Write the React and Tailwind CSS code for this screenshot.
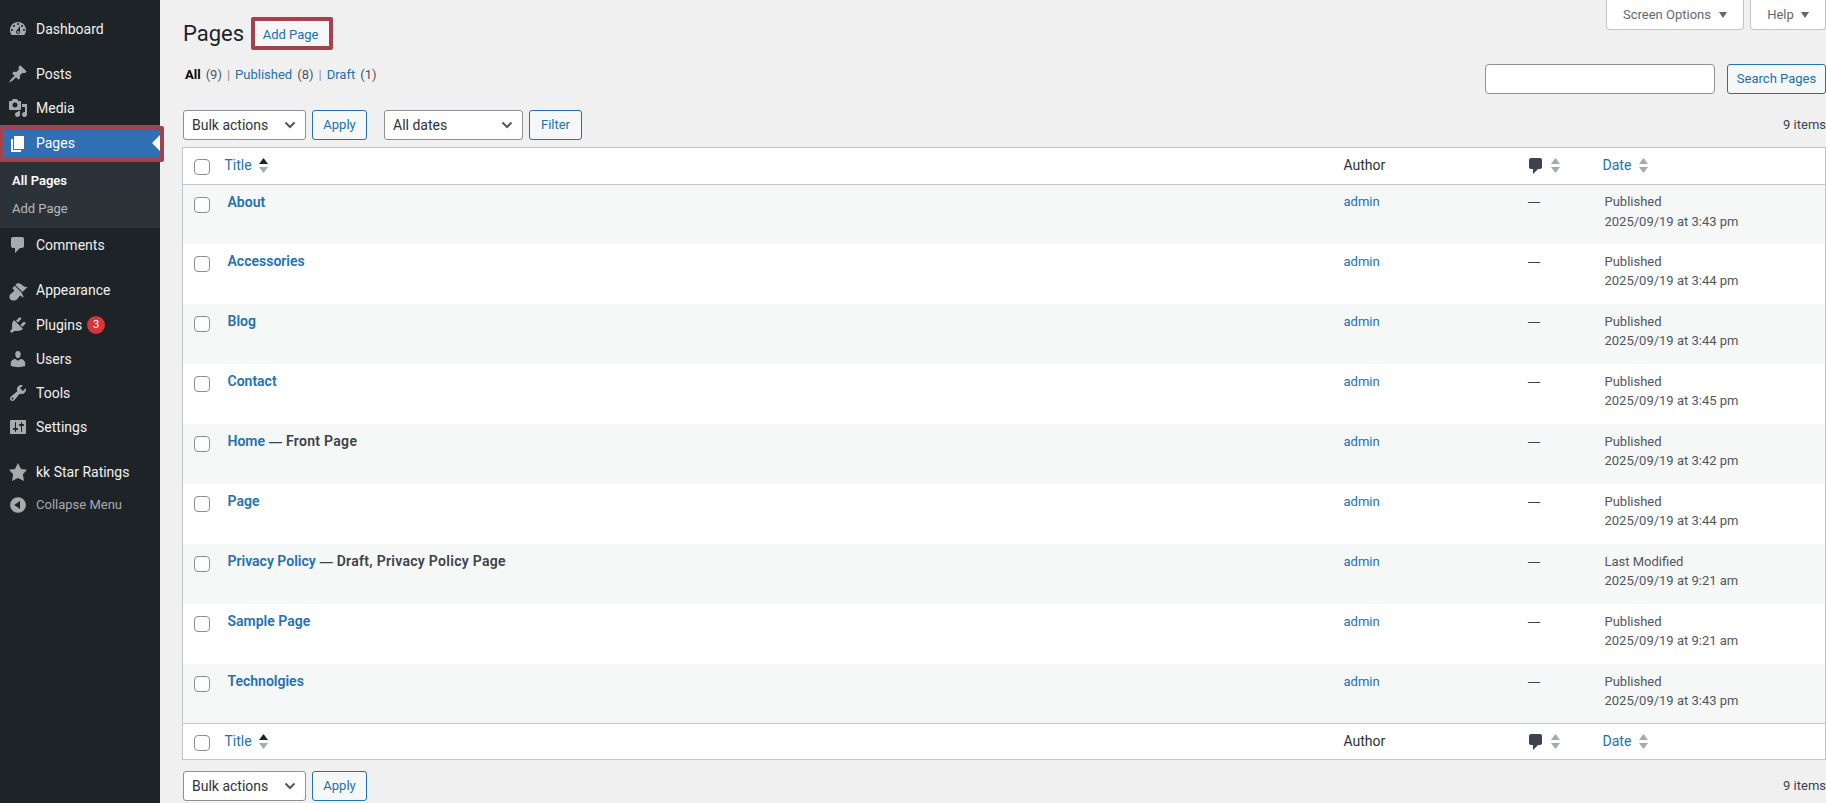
import React from "react";

const P = {
  dashboard: "M3.76 16h12.48c1.1-1.37 1.76-3.11 1.76-5 0-4.42-3.58-8-8-8s-8 3.58-8 8c0 1.89.66 3.63 1.76 5zM10 4c.55 0 1 .45 1 1s-.45 1-1 1-1-.45-1-1 .45-1 1-1zM6 6c.55 0 1 .45 1 1s-.45 1-1 1-1-.45-1-1 .45-1 1-1zm8 0c.55 0 1 .45 1 1s-.45 1-1 1-1-.45-1-1 .45-1 1-1zm-5.37 5.55L12 7v6c0 1.1-.9 2-2 2s-2-.9-2-2c0-.57.24-1.08.63-1.45zM4 10c.55 0 1 .45 1 1s-.45 1-1 1-1-.45-1-1 .45-1 1-1zm12 0c.55 0 1 .45 1 1s-.45 1-1 1-1-.45-1-1 .45-1 1-1zm-5 3c0-.55-.45-1-1-1s-1 .45-1 1 .45 1 1 1 1-.45 1-1z",
  posts: "M10.44 3.02l1.82-1.82 6.36 6.35-1.83 1.82c-1.05-.68-2.48-.57-3.41.36l-.75.75c-.92.93-1.04 2.35-.35 3.41l-1.83 1.82-2.41-2.41-2.8 2.79c-.42.42-3.38 2.71-3.8 2.29s1.86-3.39 2.28-3.81l2.79-2.79L4.1 9.36l1.83-1.82c1.05.69 2.48.57 3.4-.36l.75-.75c.93-.92 1.05-2.35.36-3.41z",
  media: "M13 11V4c0-.55-.45-1-1-1h-1.67L9 1H5L3.67 3H2c-.55 0-1 .45-1 1v7c0 .55.45 1 1 1h10c.55 0 1-.45 1-1zM7 4.5c1.38 0 2.5 1.12 2.5 2.5S8.38 9.5 7 9.5 4.5 8.38 4.5 7 5.62 4.5 7 4.5zM14 6h5v10.5c0 1.38-1.12 2.5-2.5 2.5S14 17.88 14 16.5s1.12-2.5 2.5-2.5c.17 0 .34.02.5.05V9h-3V6zm-4 8.05V13h2v3.5c0 1.38-1.12 2.5-2.5 2.5S7 17.88 7 16.5 8.12 14 9.5 14c.17 0 .34.02.5.05z",
  pages: "M6 15V2h10v13H6zm-1 1h8v2H3V5h2v11z",
  comments: "M5 2h9c1.1 0 2 .9 2 2v7c0 1.1-.9 2-2 2h-2l-5 5v-5H5c-1.1 0-2-.9-2-2V4c0-1.1.9-2 2-2z",
  appearance: "M14.48 11.06L7.41 3.99l1.5-1.5c.5-.56 2.3-.47 3.51.32 1.21.8 1.43 1.28 2.91 2.1 1.18.64 2.45 1.26 4.45.85zm-.71.71L6.7 4.7 4.93 6.47c-.39.39-.39 1.02 0 1.41l1.06 1.06c.39.39.39 1.03 0 1.42-.6.6-1.43 1.11-2.21 1.69-.35.26-.7.53-1.01.84C1.43 13.23.75 16.8 2.49 18.54c1.74 1.74 5.3 1.06 6.66-.28.31-.31.58-.66.84-1.01.58-.78 1.09-1.61 1.69-2.21.39-.39 1.03-.39 1.42 0l1.06 1.06c.39.39 1.02.39 1.41 0z",
  plugins: "M13.11 4.36L9.87 7.6 8 5.73l3.24-3.24c.35-.34 1.05-.2 1.56.32.52.51.66 1.21.31 1.55zm-8 1.77l.91-1.12 9.01 9.01-1.19.84c-.71.71-2.63 1.16-3.82 1.16H6.14L4.9 17.26c-.59.59-1.54.59-2.12 0-.59-.58-.59-1.53 0-2.12l1.24-1.24v-3.88c0-1.13.4-3.19 1.09-3.89zm7.26 3.97l3.24-3.24c.34-.35 1.04-.21 1.55.31.52.51.66 1.21.31 1.55l-3.24 3.25z",
  users: "M10 9.25c-2.27 0-2.73-3.44-2.73-3.44C7 4.02 7.82 2 9.97 2c2.16 0 2.98 2.02 2.71 3.81 0 0-.41 3.44-2.68 3.44zm0 2.57L12.72 10c2.39 0 4.52 2.33 4.52 4.53v2.49s-3.65 1.13-7.24 1.13c-3.65 0-7.24-1.13-7.24-1.13v-2.49c0-2.25 1.94-4.48 4.47-4.48z",
  tools: "M16.68 9.77c-1.34 1.34-3.3 1.67-4.95.99l-5.41 6.52c-.99.99-2.59.99-3.58 0s-.99-2.59 0-3.57l6.52-5.42c-.68-1.65-.35-3.61.99-4.95 1.28-1.28 3.12-1.62 4.72-1.06l-2.89 2.89 2.82 2.82 2.86-2.87c.53 1.58.18 3.39-1.08 4.65zM3.81 16.21c.4.39 1.04.39 1.43 0 .4-.4.4-1.04 0-1.43-.39-.4-1.03-.4-1.43 0-.39.39-.39 1.03 0 1.43z",
  settings: "M18 16V4c0-.55-.45-1-1-1H3c-.55 0-1 .45-1 1v12c0 .55.45 1 1 1h14c.55 0 1-.45 1-1zM8 11h1c.55 0 1 .45 1 1s-.45 1-1 1H8v1.5c0 .28-.22.5-.5.5s-.5-.22-.5-.5V13H6c-.55 0-1-.45-1-1s.45-1 1-1h1V5.5c0-.28.22-.5.5-.5s.5.22.5.5V11zm5-2h-1c-.55 0-1-.45-1-1s.45-1 1-1h1V5.5c0-.28.22-.5.5-.5s.5.22.5.5V7h1c.55 0 1 .45 1 1s-.45 1-1 1h-1v5.5c0 .28-.22.5-.5.5s-.5-.22-.5-.5V9z",
  star: "M10 1l3 6 6 .75-4.12 4.62L16 19l-6-3-6 3 1.13-6.63L1 7.75 7 7z",
  collapse: "M10 2.16c4.33 0 7.84 3.51 7.84 7.84s-3.51 7.84-7.84 7.84S2.16 14.33 2.16 10 5.71 2.16 10 2.16zm2 11.72V6.12L6.18 9.97z",
};

function Icon({ d, className }) {
  return (
    <svg viewBox="0 0 20 20" className={className} fill="currentColor">
      <path d={d} fillRule="evenodd" />
    </svg>
  );
}

function MenuItem({ icon, label, badge, className = "h-[34px]" }) {
  return (
    <div className={`flex items-center text-[14px] text-[#f0f0f1] ${className}`}>
      <Icon d={icon} className="ml-[8px] h-[20px] w-[20px] text-[#a7aaad]" />
      <span className="ml-[8px]">{label}</span>
      {badge && (
        <span className="ml-[5px] flex h-[18px] w-[18px] items-center justify-center rounded-full bg-[#d63638] text-[11px] text-white">
          {badge}
        </span>
      )}
    </div>
  );
}

function Sidebar() {
  return (
    <aside className="w-[160px] shrink-0 bg-[#1d2327] pt-[12px]">
      <MenuItem icon={P.dashboard} label="Dashboard" />
      <div className="h-[11px]" />
      <MenuItem icon={P.posts} label="Posts" />
      <MenuItem icon={P.media} label="Media" />
      <div className="relative flex h-[37px] items-center bg-[#2f6fb2] text-[14px] text-white">
        <Icon d={P.pages} className="ml-[8px] h-[20px] w-[20px] text-white" />
        <span className="ml-[8px]">Pages</span>
        <svg viewBox="0 0 8 16" className="absolute right-0 top-[10px] h-[16px] w-[8px]" fill="#fff">
          <path d="M8 0v16L0 8z" />
        </svg>
        <div className="absolute -right-[4px] top-[1px] bottom-0 left-0 rounded-[2px] border-y-[4px] border-r-[4px] border-l-[3px] border-[#a1424c]" />
      </div>
      <div className="h-[66px] bg-[#2c3338] pt-[5px] text-[13px]">
        <div className="flex h-[28px] items-center pl-[12px] font-semibold text-white">All Pages</div>
        <div className="flex h-[28px] items-center pl-[12px] text-[#b4b9be]">Add Page</div>
      </div>
      <MenuItem icon={P.comments} label="Comments" />
      <div className="h-[11px]" />
      <MenuItem icon={P.appearance} label="Appearance" className="h-[35px]" />
      <MenuItem icon={P.plugins} label="Plugins" badge="3" />
      <MenuItem icon={P.users} label="Users" />
      <MenuItem icon={P.tools} label="Tools" />
      <MenuItem icon={P.settings} label="Settings" />
      <div className="h-[11px]" />
      <MenuItem icon={P.star} label="kk Star Ratings" />
      <div className="flex h-[32px] items-center text-[13px] text-[#a7aaad]">
        <Icon d={P.collapse} className="ml-[8px] h-[20px] w-[20px]" />
        <span className="ml-[8px]">Collapse Menu</span>
      </div>
    </aside>
  );
}

function Button({ children, className = "" }) {
  return (
    <div className={`flex h-[30px] items-center justify-center rounded-[3px] border border-[#2271b1] bg-[#f6f7f7] text-[13px] text-[#2271b1] ${className}`}>
      {children}
    </div>
  );
}

function Select({ label, className = "" }) {
  return (
    <div className={`flex h-[30px] items-center justify-between rounded-[3px] border border-[#8c8f94] bg-white pl-[8px] pr-[9px] text-[14px] text-[#2c3338] ${className}`}>
      <span>{label}</span>
      <svg viewBox="0 0 12 8" className="h-[8px] w-[12px]" fill="none" stroke="#50575e" strokeWidth="2">
        <path d="M1.5 1.5 6 6l4.5-4.5" />
      </svg>
    </div>
  );
}

function Check({ className = "" }) {
  return <div className={`h-[16px] w-[16px] rounded-[4px] border border-[#8c8f94] bg-white ${className}`} />;
}

function Sort({ active, className = "ml-[6px]" }) {
  return (
    <svg viewBox="0 0 9 15" className={`h-[15px] w-[9px] ${className}`}>
      <path d="M4.5 0 9 6H0z" fill={active ? "#1d2327" : "#a7aaad"} />
      <path d="M4.5 15 9 9H0z" fill="#a7aaad" />
    </svg>
  );
}

function HeaderRow({ className = "", cellClass, checkClass, textClass = "" }) {
  return (
    <tr className={`bg-white text-[14px] ${className}`}>
      <td className={`pl-[11px] align-middle ${cellClass}`}><Check className={checkClass} /></td>
      <td className={`pl-[5px] align-middle ${textClass}`}>
        <div className="flex items-center text-[#2271b1]">Title<Sort active className="ml-[7px]" /></div>
      </td>
      <td className={`pl-[8px] align-middle text-[#2c3338] ${textClass}`}>Author</td>
      <td className={`align-middle ${textClass}`}>
        <div className="flex items-center">
          <Icon d={P.comments} className="h-[20px] w-[20px] text-[#3c434a]" />
          <Sort className="ml-[5px]" />
        </div>
      </td>
      <td className={`pl-[6px] align-middle ${textClass}`}>
        <div className="flex items-center text-[#2271b1]">Date<Sort className="ml-[8px]" /></div>
      </td>
    </tr>
  );
}

const rows = [
  ["About", "", "Published", "2025/09/19 at 3:43 pm"],
  ["Accessories", "", "Published", "2025/09/19 at 3:44 pm"],
  ["Blog", "", "Published", "2025/09/19 at 3:44 pm"],
  ["Contact", "", "Published", "2025/09/19 at 3:45 pm"],
  ["Home", "Front Page", "Published", "2025/09/19 at 3:42 pm"],
  ["Page", "", "Published", "2025/09/19 at 3:44 pm"],
  ["Privacy Policy", "Draft, Privacy Policy Page", "Last Modified", "2025/09/19 at 9:21 am"],
  ["Sample Page", "", "Published", "2025/09/19 at 9:21 am"],
  ["Technolgies", "", "Published", "2025/09/19 at 3:43 pm"],
];

export default function App() {
  return (
    <div className="flex h-[803px] overflow-hidden bg-[#f0f0f1] font-['Roboto',sans-serif] text-[13px] text-[#3c434a]">
      <Sidebar />
      <main className="min-w-0 flex-1 pl-[22px]">
        <div className="flex h-[110px] items-start justify-between">
          <div className="pt-[19px]">
            <div className="flex items-center">
              <h1 className="ml-[1px] text-[22px] leading-[30px] text-[#1d2327]">Pages</h1>
              <div className="relative ml-[8px] flex h-[30px] w-[78px] items-center justify-center border-r border-[#2271b1] bg-[#f6f7f7] pt-[1px] text-[13px] text-[#2271b1]">
                Add Page
                <div className="absolute -bottom-[1px] -left-[1px] -right-[4px] -top-[2px] rounded-[2px] border-[4px] border-[#a1424c]" />
              </div>
            </div>
            <div className="ml-[3px] mt-[16px] flex items-center gap-[5px]">
              <span className="font-bold text-black">All</span>
              <span className="text-[#50575e]">(9)</span>
              <span className="text-[#8c8f94]">|</span>
              <span className="text-[#2271b1]">Published</span>
              <span className="text-[#50575e]">(8)</span>
              <span className="text-[#8c8f94]">|</span>
              <span className="text-[#2271b1]">Draft</span>
              <span className="text-[#50575e]">(1)</span>
            </div>
          </div>
          <div className="flex flex-col items-end">
            <div className="flex gap-[6px]">
              <div className="flex h-[30px] w-[138px] items-center justify-center gap-[8px] rounded-b-[4px] border border-t-0 border-[#c3c4c7] bg-white text-[#646970]">
                Screen Options
                <svg viewBox="0 0 8 6" className="h-[6px] w-[8px]" fill="#646970"><path d="M0 0h8L4 6z" /></svg>
              </div>
              <div className="flex h-[30px] w-[76px] items-center justify-center gap-[7px] rounded-b-[4px] border border-t-0 border-[#c3c4c7] bg-white text-[#646970]">
                Help
                <svg viewBox="0 0 8 6" className="h-[6px] w-[8px]" fill="#646970"><path d="M0 0h8L4 6z" /></svg>
              </div>
            </div>
            <div className="mt-[34px] flex gap-[12px]">
              <div className="h-[30px] w-[230px] rounded-[4px] border border-[#8c8f94] bg-white" />
              <Button className="w-[99px]">Search Pages</Button>
            </div>
          </div>
        </div>

        <div className="flex h-[30px] items-center">
          <Select label="Bulk actions" className="ml-[1px] w-[123px]" />
          <Button className="ml-[6px] w-[55px]">Apply</Button>
          <Select label="All dates" className="ml-[17px] w-[139px]" />
          <Button className="ml-[6px] w-[53px]">Filter</Button>
          <span className="ml-auto text-[#3c434a]">9 items</span>
        </div>

        <table className="mt-[7px] w-full table-fixed border-collapse border border-[#c3c4c7]">
          <colgroup>
            <col className="w-[37px]" />
            <col />
            <col className="w-[190px]" />
            <col className="w-[71px]" />
            <col className="w-[229px]" />
          </colgroup>
          <thead>
            <HeaderRow className="border-b border-[#c3c4c7]" cellClass="h-[37px]" checkClass="mt-[1px]" textClass="pb-[1px]" />
          </thead>
          <tbody>
            {rows.map((r, i) => {
              const top = i === 0 ? "pt-[7px]" : "pt-[8px]";
              return (
                <tr key={r[0]} className={`${i === 0 ? "h-[59px]" : "h-[60px]"} ${i % 2 === 0 ? "bg-[#f6f7f7]" : "bg-white"}`}>
                  <td className="pl-[11px] pt-[12px] align-top"><Check /></td>
                  <td className="pl-[8px] pt-[7px] align-top text-[14px] font-semibold leading-[20px]">
                    <span className="text-[#2271b1]">{r[0]}</span>
                    {r[1] && (
                      <span className="text-[#3c434a]">
                        {" "}<span className="font-['Noto_Sans',sans-serif]">—</span>{" "}
                        <span className="tracking-[0.3px]">{r[1]}</span>
                      </span>
                    )}
                  </td>
                  <td className={`pl-[8px] align-top leading-[19.5px] text-[#2271b1] ${top}`}>admin</td>
                  <td className={`pl-[2px] align-top font-['Noto_Sans',sans-serif] leading-[19.5px] text-[#3c434a] ${top}`}>—</td>
                  <td className={`pl-[8px] align-top leading-[19.5px] text-[#50575e] ${top}`}>
                    {r[2]}<br />{r[3]}
                  </td>
                </tr>
              );
            })}
          </tbody>
          <tfoot>
            <HeaderRow className="border-t border-[#c3c4c7]" cellClass="h-[36px]" checkClass="mt-[2px]" />
          </tfoot>
        </table>

        <div className="mt-[11px] flex h-[30px] items-center">
          <Select label="Bulk actions" className="ml-[1px] w-[123px]" />
          <Button className="ml-[6px] w-[55px]">Apply</Button>
          <span className="ml-auto text-[#3c434a]">9 items</span>
        </div>
      </main>
    </div>
  );
}
